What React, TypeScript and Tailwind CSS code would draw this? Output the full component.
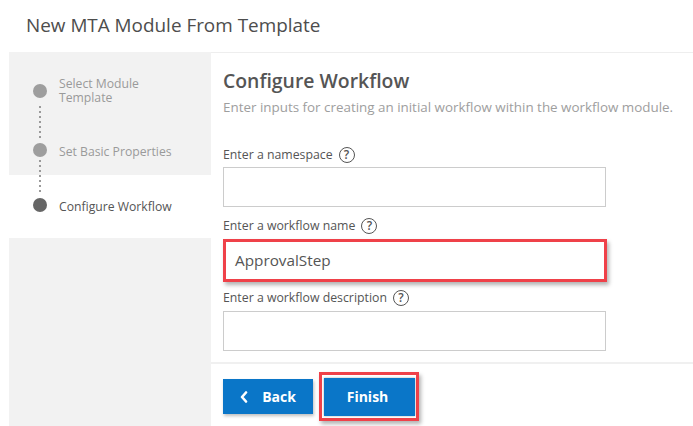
import React from "react";

function Help() {
  return (
    <span className="ml-[6px] inline-flex h-[16px] w-[16px] items-center justify-center rounded-full border-[1.5px] border-[#555555] text-[12px] font-semibold leading-none text-[#555555]">
      ?
    </span>
  );
}

function Dots({ h }: { h: number }) {
  return (
    <div className="ml-[24px] w-[14px]" style={{ height: h }}>
      <svg width="14" height={h} viewBox={`0 0 14 ${h}`}>
        <line x1="7" y1="0" x2="7" y2={h} stroke="#9a9a9a" strokeWidth="2" strokeDasharray="2 3" />
      </svg>
    </div>
  );
}

function Label({ text }: { text: string }) {
  return (
    <div className="flex h-[18px] items-center text-[12.3px] leading-[18px] text-[#555555]">
      <span>{text}</span>
      <Help />
    </div>
  );
}

export default function App() {
  return (
    <div className="h-[426px] w-[693px] overflow-hidden bg-white font-['Open_Sans',sans-serif]">
      <div className="h-[52px] pl-[26px] pt-[12px] text-[18.9px] leading-[26px] text-[#4d4d4d]">
        New MTA Module From Template
      </div>
      <div className="flex h-[374px]">
        {/* Sidebar */}
        <div className="ml-[9px] flex w-[202px] flex-col bg-[#f2f2f2]">
          <div className="h-[123px] pt-[25px]">
            <div className="flex items-center">
              <div className="ml-[24px] h-[14px] w-[14px] rounded-full bg-[#9e9e9e]" />
              <div className="ml-[12px] text-[12.2px] leading-[13.5px] text-[#9a9a9a]">
                Select Module
                <br />
                Template
              </div>
            </div>
            <div className="mt-[2px]">
              <Dots h={32} />
            </div>
            <div className="mt-[5px] flex h-[14px] items-center">
              <div className="ml-[24px] h-[14px] w-[14px] rounded-full bg-[#9e9e9e]" />
              <div className="ml-[12px] pt-[3px] text-[12.2px] leading-[14px] text-[#9a9a9a]">Set Basic Properties</div>
            </div>
            <div className="mt-[3px]">
              <Dots h={15} />
            </div>
          </div>
          <div className="h-[63px] bg-white">
            <Dots h={17} />
            <div className="mt-[6px] flex h-[14px] items-center">
              <div className="ml-[24px] h-[14px] w-[14px] rounded-full bg-[#666666]" />
              <div className="ml-[12px] pt-[3px] text-[12.2px] leading-[14px] text-[#555555]">Configure Workflow</div>
            </div>
          </div>
          <div className="flex-1" />
        </div>

        {/* Main */}
        <div className="flex flex-1 flex-col border-t border-[#eeeeee]">
          <div className="border-b-2 border-[#f0f0f0] pb-[11px] pl-[12px]">
            <div className="mt-[15px] text-[19.4px] font-semibold leading-[26px] text-[#555555]">Configure Workflow</div>
            <div className="mt-[4px] text-[13.4px] leading-[18px] text-[#9e9e9e]">
              Enter inputs for creating an initial workflow within the workflow module.
            </div>
            <div className="mt-[30px]">
              <Label text="Enter a namespace" />
            </div>
            <div className="mt-[3px] h-[40px] w-[383px] border border-[#cccccc] bg-white" />
            <div className="mt-[10px]">
              <Label text="Enter a workflow name" />
            </div>
            <div className="mt-[4px] flex h-[43px] w-[384px] items-center border-[3px] border-[#ef4149] bg-white pl-[9px] text-[15.3px] text-[#555555] shadow-[2px_3px_4px_rgba(0,0,0,0.3)]">
              ApprovalStep
            </div>
            <div className="mt-[7px]">
              <Label text="Enter a workflow description" />
            </div>
            <div className="mt-[4px] h-[40px] w-[383px] border border-[#cccccc] bg-white" />
          </div>
          <div className="mt-[8px] flex items-center pl-[12px]">
            <button className="flex h-[35px] w-[90px] items-center justify-center gap-[14px] bg-[#0a76c8] text-[14px] font-bold text-white shadow-[1px_2px_3px_rgba(0,0,0,0.25)]">
              <svg width="8" height="12" viewBox="0 0 8 12">
                <path d="M6 1.5 L2 6 L6 10.5" fill="none" stroke="white" strokeWidth="2.6" strokeLinecap="round" strokeLinejoin="round" />
              </svg>
              <span>Back</span>
            </button>
            <div className="ml-[6px] flex h-[49px] w-[100px] items-center justify-center border-[3px] border-[#ef4149] shadow-[2px_3px_4px_rgba(0,0,0,0.3)]">
              <button className="flex h-[38px] w-[91px] items-center justify-center bg-[#0a76c8] pr-[3px] text-[14px] font-bold text-white shadow-[0_0_2px_rgba(0,0,0,0.35)]">
                Finish
              </button>
            </div>
          </div>
        </div>
      </div>
    </div>
  );
}
